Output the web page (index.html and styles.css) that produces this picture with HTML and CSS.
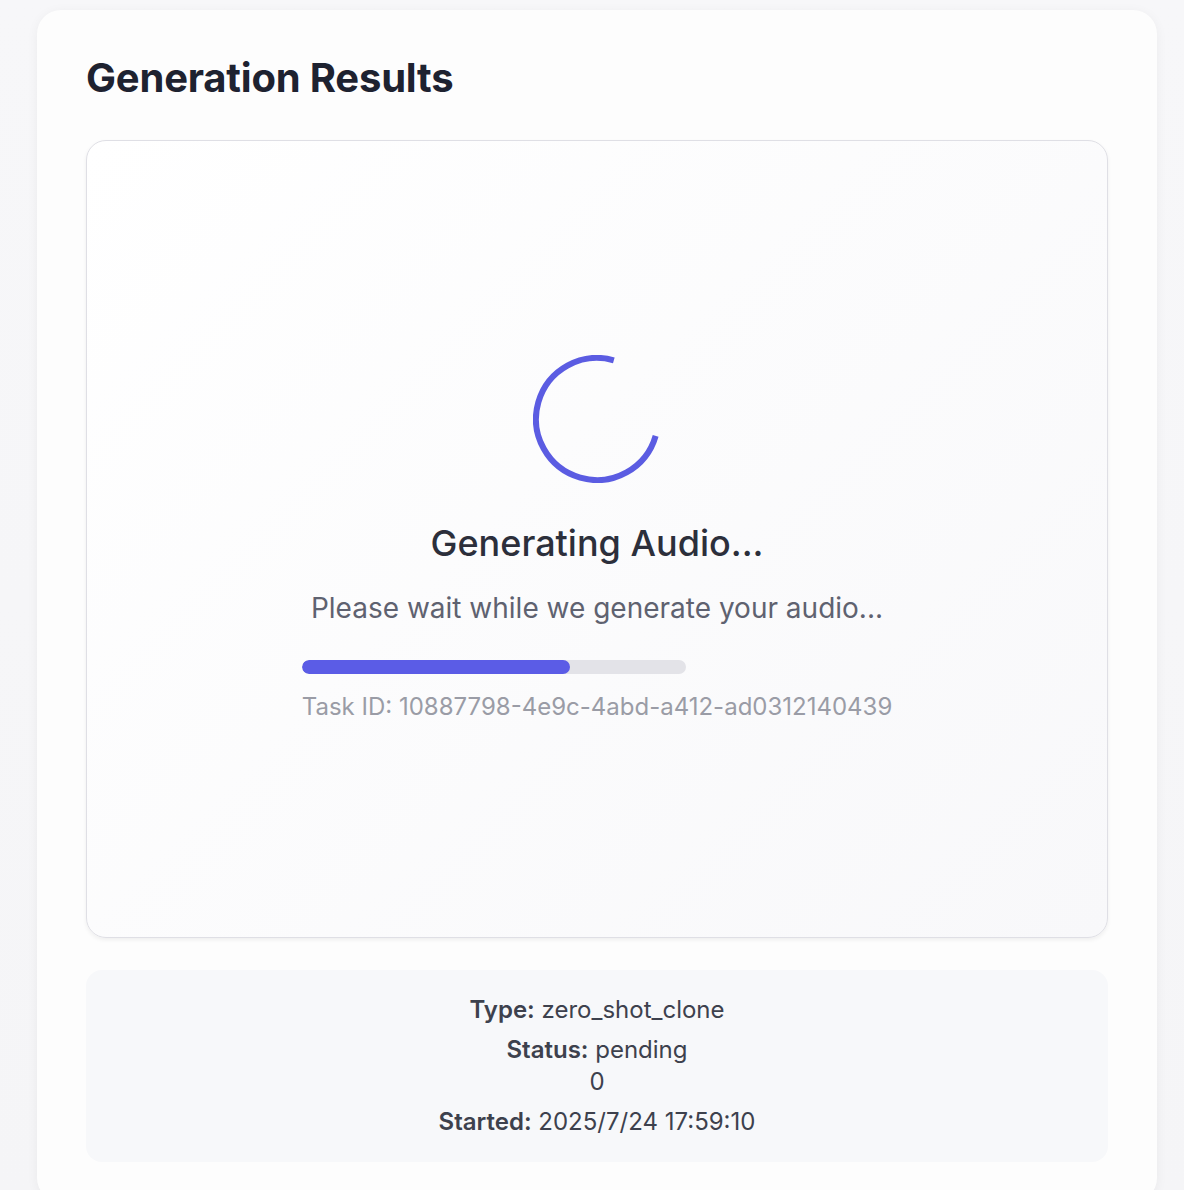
FILE: index.html
```html
<!DOCTYPE html>
<html lang="en">
<head>
    <meta charset="UTF-8">
    <meta name="viewport" content="width=device-width, initial-scale=1.0">
    <title>Generation Results</title>
    <link rel="stylesheet" href="styles.css">
</head>
<body>

    <div class="page">
        <section class="results-card">
            <h1 class="results-title">Generation Results</h1>

            <div class="loading-box">
                <svg class="spinner" width="128" height="128" viewBox="0 0 128 128">
                    <circle cx="64" cy="64" r="61" fill="none" stroke="#5b5ce2" stroke-width="6"
                            stroke-dasharray="287 97" transform="rotate(16 64 64)"/>
                </svg>
                <h2 class="loading-title">Generating Audio...</h2>
                <p class="loading-text">Please wait while we generate your audio...</p>
                <div class="progress-wrap">
                    <div class="progress-track">
                        <div class="progress-fill" style="width: 70%"></div>
                    </div>
                    <p class="task-id">Task ID: 10887798-4e9c-4abd-a412-ad0312140439</p>
                </div>
            </div>

            <div class="task-info">
                <p><strong>Type:</strong> zero_shot_clone</p>
                <p><strong>Status:</strong> pending<br>0</p>
                <p><strong>Started:</strong> 2025/7/24 17:59:10</p>
            </div>
        </section>
    </div>

</body>
</html>
```

FILE: styles.css
```css
body {
    margin: 0;
    font-family: 'Inter', 'Noto Sans', sans-serif;
    background: linear-gradient(180deg, #f7f7f9 0%, #f5f5f7 100%);
    min-height: 100vh;
}

.page {
    padding: 10px 27px 0 37px;
}

.results-card {
    width: 1120px;
    box-sizing: border-box;
    padding: 46px 49px 40px;
    background-color: #fdfdfd;
    border-radius: 24px;
    box-shadow: 0 2px 12px rgba(0, 0, 0, 0.05);
}

.results-title {
    margin: 0 0 40px;
    font-size: 40px;
    line-height: 44px;
    font-weight: 700;
    letter-spacing: -0.2px;
    color: #1e2230;
}

.loading-box {
    height: 798px;
    box-sizing: border-box;
    display: flex;
    flex-direction: column;
    align-items: center;
    justify-content: center;
    border: 1px solid #dfdfe5;
    border-radius: 20px;
    background: linear-gradient(135deg, #ffffff 0%, #f8f8fa 100%);
    box-shadow: 0 2px 4px rgba(0, 0, 0, 0.06);
}

.spinner {
    display: block;
}

.loading-title {
    margin: 38px 0 0;
    font-size: 36px;
    line-height: 44px;
    font-weight: 500;
    color: #2c2f3b;
}

.loading-text {
    margin: 25px 0 0;
    font-size: 28px;
    line-height: 36px;
    color: #5f6270;
}

.progress-wrap {
    margin-top: 34px;
}

.progress-track {
    width: 384px;
    height: 14px;
    border-radius: 7px;
    background-color: #e3e3e8;
    overflow: hidden;
}

.progress-fill {
    height: 100%;
    border-radius: 7px;
    background-color: #5b5ce6;
}

.task-id {
    margin: 17px 0 0;
    font-size: 24px;
    line-height: 32px;
    color: #9a9ca6;
}

.task-info {
    margin-top: 32px;
    padding: 16px 24px;
    background-color: #f7f8fa;
    border-radius: 16px;
    text-align: center;
    font-size: 24px;
    line-height: 32px;
    color: #3d414d;
}

.task-info p {
    margin: 8px 0;
}

.task-info strong {
    font-weight: 600;
}
```
